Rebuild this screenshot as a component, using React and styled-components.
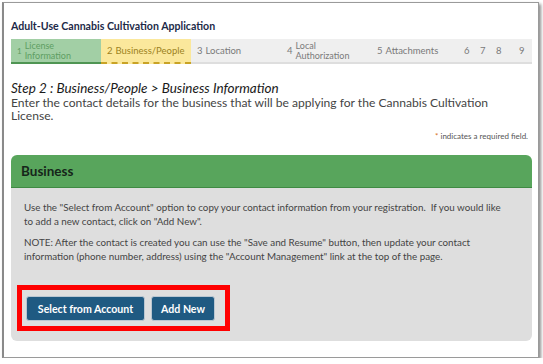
import React from 'react'
import styled, { createGlobalStyle } from 'styled-components'

const GlobalStyle = createGlobalStyle`
  html, body {
    margin: 0;
    padding: 0;
    background: #ffffff;
  }
  body {
    font-family: Lato, "Open Sans", sans-serif;
  }
`;

const Frame = styled.div`
  box-sizing: border-box;
  margin: 2px 0 0 2px;
  width: 537px;
  height: 356px;
  border: 1px solid #9a9a9a;
  border-left: 2px solid #8a8a8a;
  box-shadow: 2px 2px 3px rgba(0, 0, 0, 0.45);
  background: #fff;
  padding: 15px 6px 0 7px;
`;

const AppTitle = styled.h1`
  margin: 0;
  font-size: 10.6px;
  font-weight: 700;
  color: #1d2a48;
  line-height: 16px;
`;

const Steps = styled.div`
  display: flex;
  margin-top: 5px;
  height: 25px;
  background: #efefef;
  border-bottom: 2px solid #dedede;
  box-sizing: border-box;
`;

const Step = styled.div`
  box-sizing: border-box;
  width: ${p => p.$w || 90}px;
  padding-left: ${p => p.$pad ?? 6}px;
  display: flex;
  align-items: center;
  gap: 3px;
  font-size: ${p => (p.$two ? 9 : 9.5)}px;
  line-height: 10px;
  color: ${p => (p.$state === 'done' ? '#5e9e63' : p.$state === 'current' ? '#9b8221' : '#7a7a7a')};
  background: ${p => (p.$state === 'done' ? '#a2cfa5' : p.$state === 'current' ? '#fbe89c' : 'transparent')};
  margin-bottom: -2px;
  border-bottom: 2px ${p => (p.$state === 'current' ? 'dashed #c9a325' : p.$state === 'done' ? 'solid #4f9553' : 'solid #dedede')};
`;

const StepNum = styled.span`
  font-size: ${p => (p.$small ? 8 : 9.5)}px;
`;

const StepLabel = styled.span`
  display: block;
`;

const StepHeading = styled.h2`
  margin: 17px 0 0;
  font-size: 13.5px;
  font-style: italic;
  font-weight: 400;
  color: #1a1a1a;
  line-height: 15px;
`;

const Intro = styled.p`
  margin: 0;
  font-size: 12.1px;
  line-height: 13px;
  color: #444;
`;

const Required = styled.div`
  text-align: right;
  margin: 9px 4px 0 0;
  font-size: 8px;
  color: #555;
  line-height: 10px;
`;

const Star = styled.span`
  color: #d7711c;
`;

const Panel = styled.section`
  margin-top: 14px;
  width: 521px;
`;

const PanelHeader = styled.div`
  height: 32px;
  background: #58a55c;
  border-bottom: 1px solid #3f8a43;
  border-radius: 6px 6px 0 0;
  display: flex;
  align-items: center;
  padding-left: 10px;
  font-size: 13.5px;
  font-weight: 700;
  color: #16251a;
`;

const PanelBody = styled.div`
  background: #dedede;
  border-radius: 0 0 6px 6px;
  padding: 13px 13px 10px 13px;
  height: 153px;
  box-sizing: border-box;
  display: flex;
  flex-direction: column;
`;

const Para = styled.p`
  margin: 0 0 ${p => p.$gap || 0}px;
  max-width: 482px;
  font-size: 9.8px;
  line-height: 13.5px;
  color: #444;
`;

const Highlight = styled.div`
  margin-top: auto;
  margin-left: -7px;
  align-self: flex-start;
  display: flex;
  gap: 6px;
  border: 5px solid #ff0000;
  padding: 6px 10px 5px 4px;
`;

const Button = styled.button`
  width: ${p => p.$w}px;
  height: 25px;
  margin: 0;
  padding: 0;
  background: #1f5a82;
  border: 1px solid #b9c6d1;
  border-radius: 3px;
  color: #fff;
  font-family: Lato, sans-serif;
  font-size: 10.6px;
  font-weight: 700;
  cursor: pointer;
`;

const steps = [
  { n: 1, label: ['License', 'Information'], state: 'done' },
  { n: 2, label: ['Business/People'], state: 'current' },
  { n: 3, label: ['Location'] },
  { n: 4, label: ['Local', 'Authorization'] },
  { n: 5, label: ['Attachments'] },
];

const App = () => {
  return (
    <>
      <GlobalStyle />
      <Frame>
        <AppTitle>Adult-Use Cannabis Cultivation Application</AppTitle>
        <Steps>
          {steps.map(s => (
            <Step key={s.n} $state={s.state} $two={s.label.length > 1}>
              <StepNum $small={s.label.length > 1 && s.state === 'done'}>{s.n}</StepNum>
              <div>
                {s.label.map(l => (
                  <StepLabel key={l}>{l}</StepLabel>
                ))}
              </div>
            </Step>
          ))}
          <Step $w={16} $pad={3}>6</Step>
          <Step $w={16} $pad={3}>7</Step>
          <Step $w={22} $pad={3}>8</Step>
          <Step $w={16} $pad={4}>9</Step>
        </Steps>

        <StepHeading>Step 2 : Business/People &gt; Business Information</StepHeading>
        <Intro>
          Enter the contact details for the business that will be applying for the Cannabis Cultivation
          License.
        </Intro>
        <Required>
          <Star>*</Star> indicates a required field.
        </Required>

        <Panel>
          <PanelHeader>Business</PanelHeader>
          <PanelBody>
            <Para $gap={8}>
              Use the "Select from Account" option to copy your contact information from your registration.&nbsp; If you would like
              to add a new contact, click on "Add New".
            </Para>
            <Para>
              NOTE: After the contact is created you can use the "Save and Resume" button, then update your contact
              information (phone number, address) using the "Account Management" link at the top of the page.
            </Para>
            <Highlight>
              <Button $w={119}>Select from Account</Button>
              <Button $w={64}>Add New</Button>
            </Highlight>
          </PanelBody>
        </Panel>
      </Frame>
    </>
  )
}

export default App
